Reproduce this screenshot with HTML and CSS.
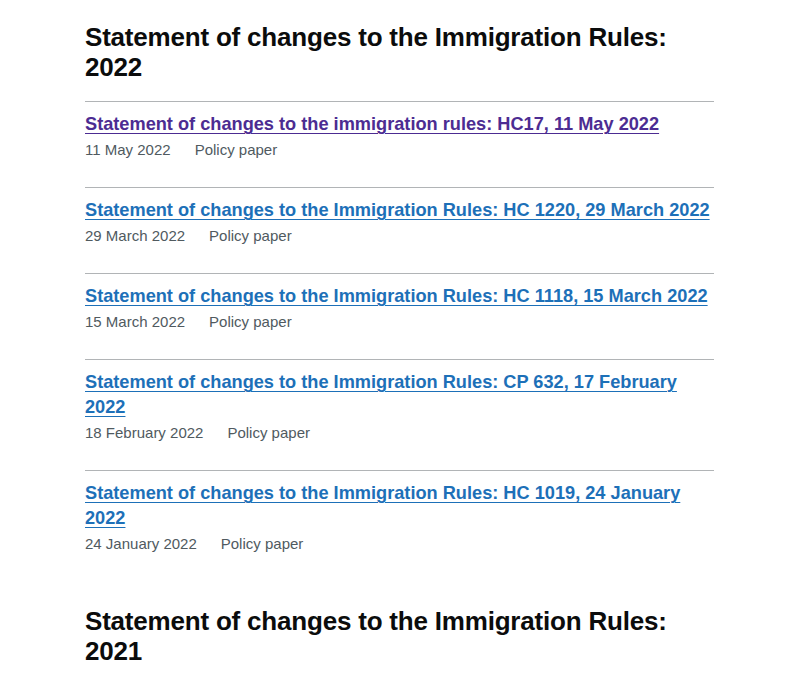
FILE: index.html
```html
<!DOCTYPE html>
<html lang="en">
<head>
<meta charset="utf-8">
<title>Statement of changes to the Immigration Rules</title>
<link rel="stylesheet" href="styles.css">
</head>
<body>
<main class="page">
  <section class="group">
    <h2 class="group-title">Statement of changes to the Immigration Rules: 2022</h2>
    <ul class="doc-list">
      <li class="doc">
        <a class="doc-link visited" href="#">Statement of changes to the immigration rules: HC17, 11 May 2022</a>
        <div class="meta"><span class="date">11 May 2022</span><span class="type">Policy paper</span></div>
      </li>
      <li class="doc">
        <a class="doc-link" href="#">Statement of changes to the Immigration Rules: HC 1220, 29 March 2022</a>
        <div class="meta"><span class="date">29 March 2022</span><span class="type">Policy paper</span></div>
      </li>
      <li class="doc">
        <a class="doc-link" href="#">Statement of changes to the Immigration Rules: HC 1118, 15 March 2022</a>
        <div class="meta"><span class="date">15 March 2022</span><span class="type">Policy paper</span></div>
      </li>
      <li class="doc">
        <a class="doc-link" href="#">Statement of changes to the Immigration Rules: CP 632, 17 February 2022</a>
        <div class="meta"><span class="date">18 February 2022</span><span class="type">Policy paper</span></div>
      </li>
      <li class="doc">
        <a class="doc-link" href="#">Statement of changes to the Immigration Rules: HC 1019, 24 January 2022</a>
        <div class="meta"><span class="date">24 January 2022</span><span class="type">Policy paper</span></div>
      </li>
    </ul>
  </section>
  <section class="group">
    <h2 class="group-title">Statement of changes to the Immigration Rules: 2021</h2>
  </section>
</main>
</body>
</html>
```
FILE: styles.css
```css
html, body {
  margin: 0;
  padding: 0;
  background: #ffffff;
}
body {
  font-family: "Liberation Sans", Arial, sans-serif;
  color: #0b0c0c;
}
.page {
  width: 629px;
  margin: 0 0 0 85px;
  padding-top: 22px;
}
.group + .group {
  margin-top: 25px;
}
.group-title {
  margin: 0 0 19px;
  font-size: 26px;
  line-height: 30px;
  font-weight: 700;
  letter-spacing: -0.2px;
}
.doc-list {
  list-style: none;
  margin: 0;
  padding: 0;
}
.doc {
  border-top: 1px solid #b1b4b6;
  padding: 10px 0 27px;
}
.doc-link {
  display: inline;
  font-size: 18.2px;
  line-height: 25px;
  font-weight: 700;
  color: #1d70b8;
  text-decoration: underline;
  text-decoration-thickness: 1px;
  text-underline-offset: 3px;
}
.doc-link.visited {
  color: #4c2c92;
}
.meta {
  margin-top: 3px;
  display: flex;
  gap: 24px;
  font-size: 15px;
  line-height: 20px;
  color: #505a5f;
}
```
